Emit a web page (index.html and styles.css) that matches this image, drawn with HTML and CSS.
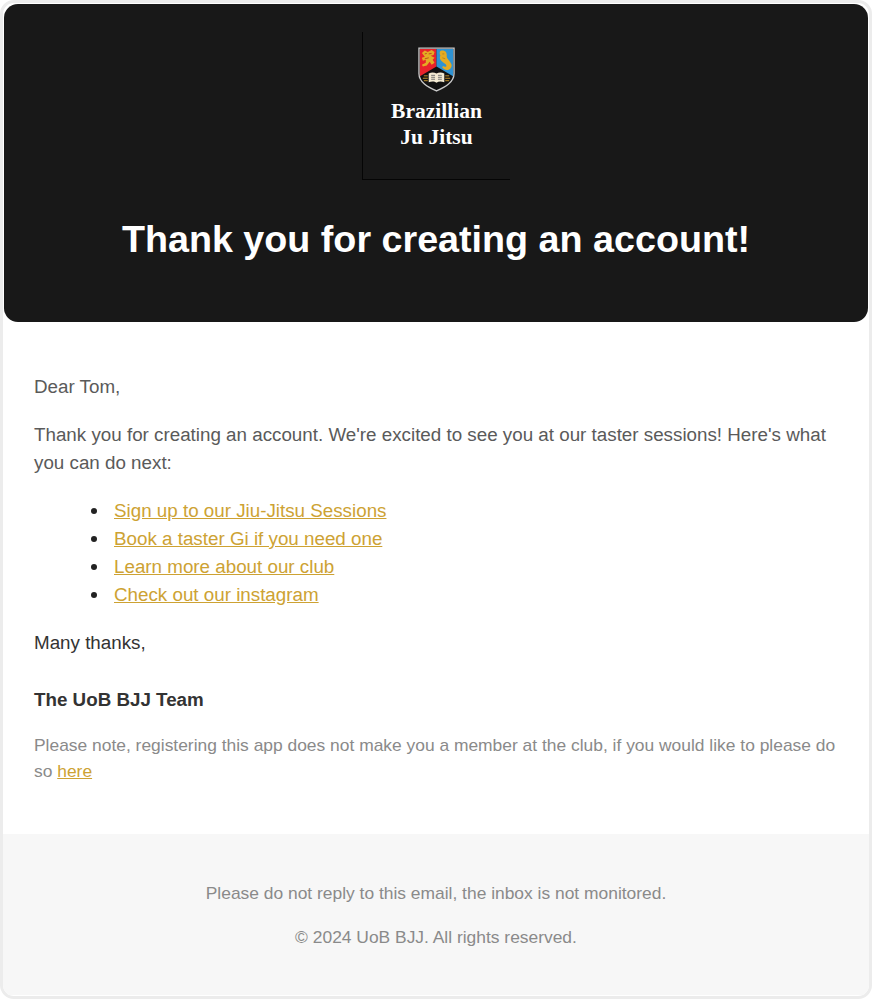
FILE: index.html
```html
<!DOCTYPE html>
<html lang="en">
<head>
<meta charset="utf-8">
<title>Thank you for creating an account!</title>
<link rel="stylesheet" href="styles.css">
</head>
<body>
<div class="card">
  <header class="hero">
    <div class="logo">
      <svg class="crest" viewBox="0 0 38 46" width="37" height="45" aria-hidden="true">
        <path d="M1 1H37V27C37 36 28 41 19 45C10 41 1 36 1 27Z" fill="#111" stroke="#c9c9c9" stroke-width="1.4"/>
        <path d="M2 2H19V20L2 30Z" fill="#e8232b"/>
        <path d="M19 2H36V30L19 20Z" fill="#2f93d3"/>
        <path d="M4 6L7 3.500L10 5L14 3L17 5L16 8L13 9L17 11L15 13L17 16L14 18L12 15L9 19L5 20L4 18L8 16L8 13L5 14L4 11L7 10Z" fill="#e5ab23"/>
        <path d="M7 7L9 6.500M11 7L14 6.500M7 12L11 11" stroke="#a8261c" stroke-width=".7"/>
        <path d="M23 4C27 2.500 30 5 29.500 9C29 12 33 14 34.500 18C35 23 29 25 26 22C24 21 25 19 27 20C29 21 30 19 28.500 17.500C24.500 15 21 12 23 8.500C22 7 22 5 23 4Z" fill="#e5ab23"/>
        <path d="M25 7L27 7M25 11L28 12" stroke="#a9791b" stroke-width=".7"/>
        <path d="M11 27C14 25.500 17 26 19 27C21 26 24 25.500 27 27V36C24 35 21 35 19 36.500C17 35 14 35 11 36Z" fill="#f3ead2"/>
        <path d="M13.500 29H17.500M13.500 31H17.500M13.500 33H17.500M20.500 29H24.500M20.500 31H24.500M20.500 33H24.500" stroke="#666" stroke-width=".9"/>
        <path d="M6 29.500H10M5 32H10M6 34.500H10M28 29.500H32M28 32H33M28 34.500H32" stroke="#d59f2a" stroke-width=".9"/>
      </svg>
      <div class="logo-name">Brazillian<br>Ju Jitsu</div>
    </div>
    <h1 class="hero-title">Thank you for creating an account!</h1>
  </header>
  <main class="content">
    <p class="para">Dear Tom,</p>
    <p class="para">Thank you for creating an account. We're excited to see you at our taster sessions! Here's what you can do next:</p>
    <ul class="links">
      <li><a href="#">Sign up to our Jiu-Jitsu Sessions</a></li>
      <li><a href="#">Book a taster Gi if you need one</a></li>
      <li><a href="#">Learn more about our club</a></li>
      <li><a href="#">Check out our instagram</a></li>
    </ul>
    <p class="para dark">Many thanks,</p>
    <p class="para dark team">The UoB BJJ Team</p>
    <p class="para note">Please note, registering this app does not make you a member at the club, if you would like to please do so <a href="#">here</a></p>
  </main>
  <footer class="foot">
    <p>Please do not reply to this email, the inbox is not monitored.</p>
    <p>© 2024 UoB BJJ. All rights reserved.</p>
  </footer>
</div>
</body>
</html>
```
FILE: styles.css
```css
* { box-sizing: border-box; }
html, body { margin: 0; height: 100%; background: #fff; }
body { font-family: "Liberation Sans", Arial, sans-serif; }
.card {
  width: 872px; height: 999px;
  border: 3px solid #ececec; border-radius: 14px;
  display: flex; flex-direction: column;
  overflow: hidden; background: #fff;
}
.hero {
  height: 318px; margin: 1px 1px 0 1px;
  background: #181818; border-radius: 14px;
  display: flex; flex-direction: column; align-items: center;
  padding-top: 28px;
}
.logo {
  width: 148px; height: 148px;
  border-left: 1px solid #050505; border-bottom: 1px solid #050505;
  display: flex; flex-direction: column; align-items: center;
  padding-top: 15px;
}
.crest { display: block; }
.logo-name {
  margin-top: 6px;
  color: #fff; text-align: center;
  font: 700 21.500px/26px "Liberation Serif", serif;
}
.hero-title {
  margin: 37px 0 0;
  color: #fff; text-align: center;
  font: 700 37.700px/44px "Liberation Sans", Arial, sans-serif;
}
.content { flex: 1; padding: 51px 30px 0 31px; font-size: 18.800px; line-height: 28px; color: #5a5a5a; }
.para { margin: 0 0 20px; }
.dark { color: #333; }
.team { font-weight: 700; margin: 29px 0 18px; }
.note { color: #8a8a8a; font-size: 17.420px; line-height: 26px; }
.links { margin: 0 0 20px; padding: 0 0 0 80px; list-style: none; }
.links li { position: relative; }
.links li::before {
  content: ""; position: absolute; left: -23px; top: 11px;
  width: 6px; height: 6px; border-radius: 50%; background: #222;
}
a { color: #cda233; text-decoration: underline; }
.foot {
  height: 161px; margin-bottom: 1px; padding-top: 46px;
  background: #f7f7f7; text-align: center; color: #8a8a8a;
  font-size: 17.420px; line-height: 26px;
}
.foot p { margin: 0 0 18px; }
```
